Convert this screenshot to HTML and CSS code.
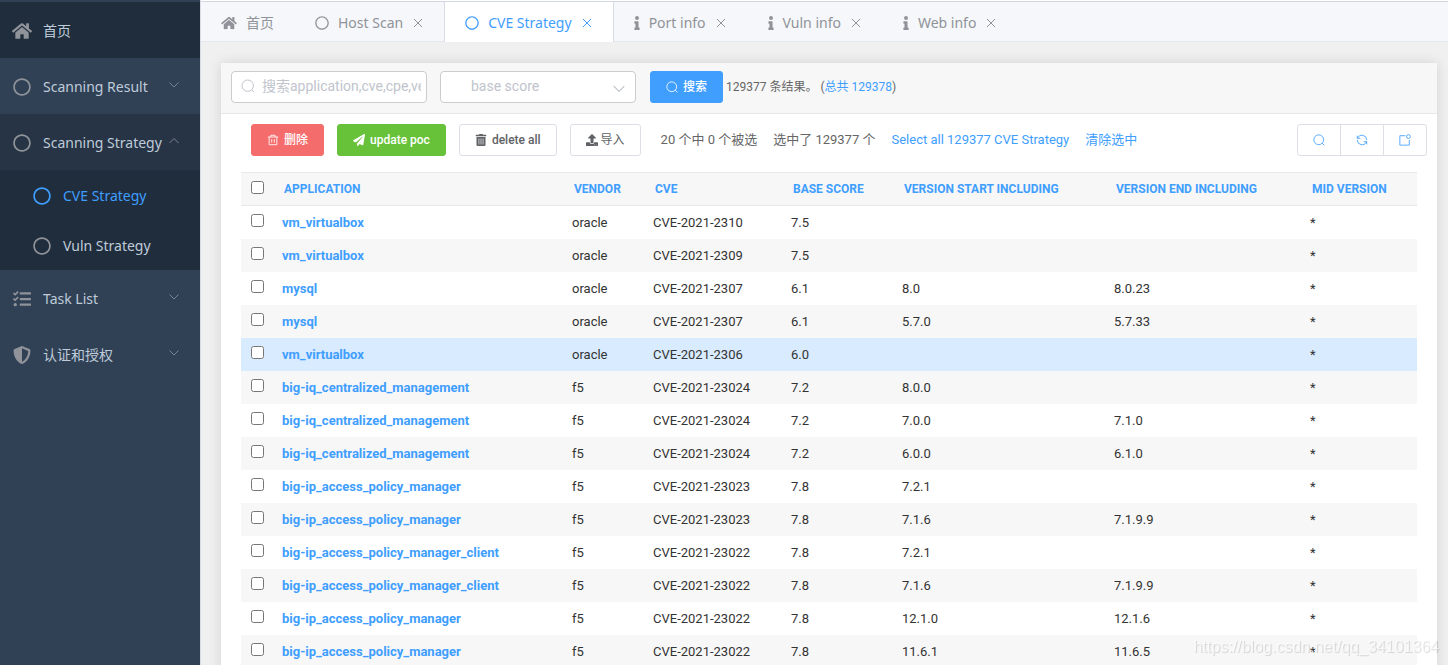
FILE: index.html
```
<!DOCTYPE html>
<html lang="zh">
<head>
<meta charset="utf-8">
<title>CVE Strategy</title>
<link rel="stylesheet" href="styles.css">
</head>
<body>
<svg class="sprite" aria-hidden="true">
  <symbol id="home" viewBox="0 0 576 512"><path d="M280.4 148.3L96 300.100V464a16 16 0 0 0 16 16l112-.3a16 16 0 0 0 16-16V368a16 16 0 0 1 16-16h64a16 16 0 0 1 16 16v95.600a16 16 0 0 0 16 16.100L464 480a16 16 0 0 0 16-16V300L295.700 148.300a12.200 12.200 0 0 0-15.300 0zM571.600 251.500L488 182.600V44a12 12 0 0 0-12-12h-56a12 12 0 0 0-12 12v72.600L318.500 43a48 48 0 0 0-61 0L4.300 251.500a12 12 0 0 0-1.600 16.900l25.500 31a12 12 0 0 0 16.900 1.600L280.400 107.200a12.200 12.200 0 0 1 15.300 0L531 301a12 12 0 0 0 16.900-1.600l25.500-31a12 12 0 0 0-1.800-16.900z"/></symbol>
  <symbol id="circle" viewBox="0 0 512 512"><path d="M256 8C119 8 8 119 8 256s111 248 248 248 248-111 248-248S393 8 256 8zm0 448c-110.500 0-200-89.500-200-200S145.500 56 256 56s200 89.500 200 200-89.500 200-200 200z"/></symbol>
  <symbol id="tasks" viewBox="0 0 512 512"><path d="M139.600 35.500a12 12 0 0 0-17 0L58.900 98.800l-22.700-22.100a12 12 0 0 0-17 0L3.500 92.400a12 12 0 0 0 0 17l47.600 47.400a12.800 12.800 0 0 0 17.600 0L156.300 69.200a12 12 0 0 0 .1-17zm0 159.200a12 12 0 0 0-17 0L58.900 258.400l-22.700-22.100a12 12 0 0 0-17 0L3.500 252a12 12 0 0 0 0 17l47.600 47.400a12.800 12.800 0 0 0 17.600 0l87.600-87.600a12 12 0 0 0 .1-17zM64 368a48 48 0 1 0 0 96 48 48 0 0 0 0-96zm432 16H208a16 16 0 0 0-16 16v32a16 16 0 0 0 16 16h288a16 16 0 0 0 16-16v-32a16 16 0 0 0-16-16zm0-320H208a16 16 0 0 0-16 16v32a16 16 0 0 0 16 16h288a16 16 0 0 0 16-16V80a16 16 0 0 0-16-16zm0 160H208a16 16 0 0 0-16 16v32a16 16 0 0 0 16 16h288a16 16 0 0 0 16-16v-32a16 16 0 0 0-16-16z"/></symbol>
  <symbol id="shield" viewBox="0 0 512 512"><path d="M466.500 83.700l-192-80a48.200 48.200 0 0 0-36.900 0l-192 80A48 48 0 0 0 16 128c0 198.500 114.500 335.700 221.500 380.300a48 48 0 0 0 36.900 0C360.100 472.600 496 349.300 496 128a48 48 0 0 0-29.500-44.300zM256.100 446.300L256 65.900l175.900 73.300c-3.300 151.400-82.100 261.100-175.800 307.100z"/></symbol>
  <symbol id="info" viewBox="0 0 192 512"><path d="M20 424.200h20V279.800H20a20 20 0 0 1-20-20V212a20 20 0 0 1 20-20h112a20 20 0 0 1 20 20v212.200h20a20 20 0 0 1 20 20V492a20 20 0 0 1-20 20H20a20 20 0 0 1-20-20v-47.800a20 20 0 0 1 20-20zM96 0a72 72 0 1 0 0 144A72 72 0 0 0 96 0z"/></symbol>
  <symbol id="plane" viewBox="0 0 512 512"><path d="M476 3.200L12.500 270.600c-18.100 10.400-15.800 35.600 2.200 43.200L121 358.400l287.300-253.200c5.500-4.900 13.300 2.600 8.600 8.300L176 407v80.500c0 23.600 28.500 32.900 42.500 15.800L282 426l124.600 52.200c14.200 6 30.400-2.900 33-18.200l72-432C515 7.800 493.300-6.800 476 3.200z"/></symbol>
  <symbol id="trash" viewBox="0 0 448 512"><path fill-rule="evenodd" d="M432 32H312l-9-19a24 24 0 0 0-22-13H166a24 24 0 0 0-21 13l-9 19H16A16 16 0 0 0 0 48v32a16 16 0 0 0 16 16h416a16 16 0 0 0 16-16V48a16 16 0 0 0-16-16zM32 128v336a48 48 0 0 0 48 48h288a48 48 0 0 0 48-48V128zm90 64h28v256h-28zm88 0h28v256h-28zm88 0h28v256h-28z"/></symbol>
  <symbol id="upload" viewBox="0 0 512 512"><path d="M296 384h-80a24 24 0 0 1-24-24V192h-87.700c-17.800 0-26.700-21.500-14.100-34.100L242.300 5.700a19.400 19.400 0 0 1 27.300 0l152.200 152.200c12.600 12.600 3.700 34.100-14.100 34.100H320v168a24 24 0 0 1-24 24zm216-8v112a24 24 0 0 1-24 24H24a24 24 0 0 1-24-24V376a24 24 0 0 1 24-24h136v8a56 56 0 0 0 56 56h80a56 56 0 0 0 56-56v-8h136a24 24 0 0 1 24 24zm-124 88a20 20 0 1 0-40 0 20 20 0 0 0 40 0zm64 0a20 20 0 1 0-40 0 20 20 0 0 0 40 0z"/></symbol>
  <symbol id="down" viewBox="0 0 12 12"><path class="line" d="M1.500 3.500L6 8l4.500-4.500"/></symbol>
  <symbol id="up" viewBox="0 0 12 12"><path class="line" d="M1.500 8L6 3.500 10.500 8"/></symbol>
  <symbol id="close" viewBox="0 0 12 12"><path class="line" d="M2 2l8 8M10 2l-8 8"/></symbol>
  <symbol id="search" viewBox="0 0 14 14"><circle class="line" cx="6.700" cy="6.700" r="5.700"/><path class="line" d="M10.700 10.700l2.500 2.500"/></symbol>
  <symbol id="bin" viewBox="0 0 14 14"><path class="line" d="M1 3.500h12M4.500 3.500v-2h5v2M2.500 3.500v9h9v-9M5.500 6v4M8.500 6v4"/></symbol>
  <symbol id="refresh" viewBox="0 0 14 14"><path class="line" d="M1.500 5.500V2M1.500 5h3.500M2 4.700A5.500 5.500 0 0 1 12.500 7M12.500 12V8.500M12.500 9H9M12 9.300A5.500 5.500 0 0 1 1.500 7"/></symbol>
  <symbol id="export" viewBox="0 0 14 14"><path class="line" d="M7.500 2H1v11h11V7"/><circle class="line" cx="11" cy="3" r="2.200"/></symbol>
</svg>
<div class="app">
  <nav class="sidebar">
    <a class="item home" href="#"><svg class="ico"><use href="#home"/></svg><span>首页</span></a>
    <a class="item" href="#"><svg class="ico"><use href="#circle"/></svg><span>Scanning Result</span><svg class="arrow"><use href="#down"/></svg></a>
    <a class="item open" href="#"><svg class="ico"><use href="#circle"/></svg><span>Scanning Strategy</span><svg class="arrow"><use href="#up"/></svg></a>
    <div class="submenu">
      <a class="item active" href="#"><svg class="ico"><use href="#circle"/></svg><span>CVE Strategy</span></a>
      <a class="item" href="#"><svg class="ico"><use href="#circle"/></svg><span>Vuln Strategy</span></a>
    </div>
    <a class="item" href="#"><svg class="ico"><use href="#tasks"/></svg><span>Task List</span><svg class="arrow"><use href="#down"/></svg></a>
    <a class="item" href="#"><svg class="ico"><use href="#shield"/></svg><span>认证和授权</span><svg class="arrow"><use href="#down"/></svg></a>
  </nav>
  <main class="main">
    <div class="tabs">
      <a class="tab" href="#"><svg class="wide"><use href="#home"/></svg><span>首页</span></a>
      <a class="tab" href="#"><svg><use href="#circle"/></svg><span>Host Scan</span><svg class="close"><use href="#close"/></svg></a>
      <a class="tab current" href="#"><svg><use href="#circle"/></svg><span>CVE Strategy</span><svg class="close"><use href="#close"/></svg></a>
      <a class="tab" href="#"><svg class="narrow"><use href="#info"/></svg><span>Port info</span><svg class="close"><use href="#close"/></svg></a>
      <a class="tab" href="#"><svg class="narrow"><use href="#info"/></svg><span>Vuln info</span><svg class="close"><use href="#close"/></svg></a>
      <a class="tab" href="#"><svg class="narrow"><use href="#info"/></svg><span>Web info</span><svg class="close"><use href="#close"/></svg></a>
    </div>
    <section class="card">
      <form class="filters">
        <label class="field"><svg class="lead"><use href="#search"/></svg><input type="text" aria-label="搜索" placeholder="搜索application,cve,cpe,version"></label>
        <label class="field"><select aria-label="base score"><option>base score</option></select><svg class="caret"><use href="#down"/></svg></label>
        <button class="btn primary" type="button"><svg><use href="#search"/></svg>搜索</button>
        <p class="result">129377 条结果。 (<a href="#">总共 129378</a>)</p>
      </form>
      <div class="actions">
        <button class="btn danger" type="button"><svg><use href="#bin"/></svg>删除</button>
        <button class="btn success" type="button"><svg><use href="#plane"/></svg>update poc</button>
        <button class="btn" type="button"><svg><use href="#trash"/></svg>delete all</button>
        <button class="btn import" type="button"><svg><use href="#upload"/></svg>导入</button>
        <div class="selection"><span>20 个中 0 个被选</span><span>选中了 129377 个</span><a href="#">Select all 129377 CVE Strategy</a><a href="#">清除选中</a></div>
        <div class="group">
          <button type="button" aria-label="搜索"><svg><use href="#search"/></svg></button>
          <button type="button" aria-label="刷新"><svg><use href="#refresh"/></svg></button>
          <button type="button" aria-label="导出"><svg><use href="#export"/></svg></button>
        </div>
      </div>
      <table class="grid">
        <colgroup><col class="c-check"><col class="c-app"><col class="c-vendor"><col class="c-cve"><col class="c-score"><col class="c-start"><col class="c-end"><col class="c-mid"></colgroup>
        <thead><tr><th><input type="checkbox" aria-label="全选"></th><th><a href="#">APPLICATION</a></th><th><a href="#">VENDOR</a></th><th><a href="#">CVE</a></th><th><a href="#">BASE SCORE</a></th><th><a href="#">VERSION START INCLUDING</a></th><th><a href="#">VERSION END INCLUDING</a></th><th><a href="#">MID VERSION</a></th></tr></thead>
        <tbody>
          <tr><td><input type="checkbox" aria-label="1"></td><td><a href="#">vm_virtualbox</a></td><td>oracle</td><td>CVE-2021-2310</td><td>7.5</td><td></td><td></td><td>*</td></tr>
          <tr><td><input type="checkbox" aria-label="2"></td><td><a href="#">vm_virtualbox</a></td><td>oracle</td><td>CVE-2021-2309</td><td>7.5</td><td></td><td></td><td>*</td></tr>
          <tr><td><input type="checkbox" aria-label="3"></td><td><a href="#">mysql</a></td><td>oracle</td><td>CVE-2021-2307</td><td>6.1</td><td>8.0</td><td>8.0.23</td><td>*</td></tr>
          <tr><td><input type="checkbox" aria-label="4"></td><td><a href="#">mysql</a></td><td>oracle</td><td>CVE-2021-2307</td><td>6.1</td><td>5.7.0</td><td>5.7.33</td><td>*</td></tr>
          <tr class="hover"><td><input type="checkbox" aria-label="5"></td><td><a href="#">vm_virtualbox</a></td><td>oracle</td><td>CVE-2021-2306</td><td>6.0</td><td></td><td></td><td>*</td></tr>
          <tr><td><input type="checkbox" aria-label="6"></td><td><a href="#">big-iq_centralized_management</a></td><td>f5</td><td>CVE-2021-23024</td><td>7.2</td><td>8.0.0</td><td></td><td>*</td></tr>
          <tr><td><input type="checkbox" aria-label="7"></td><td><a href="#">big-iq_centralized_management</a></td><td>f5</td><td>CVE-2021-23024</td><td>7.2</td><td>7.0.0</td><td>7.1.0</td><td>*</td></tr>
          <tr><td><input type="checkbox" aria-label="8"></td><td><a href="#">big-iq_centralized_management</a></td><td>f5</td><td>CVE-2021-23024</td><td>7.2</td><td>6.0.0</td><td>6.1.0</td><td>*</td></tr>
          <tr><td><input type="checkbox" aria-label="9"></td><td><a href="#">big-ip_access_policy_manager</a></td><td>f5</td><td>CVE-2021-23023</td><td>7.8</td><td>7.2.1</td><td></td><td>*</td></tr>
          <tr><td><input type="checkbox" aria-label="10"></td><td><a href="#">big-ip_access_policy_manager</a></td><td>f5</td><td>CVE-2021-23023</td><td>7.8</td><td>7.1.6</td><td>7.1.9.9</td><td>*</td></tr>
          <tr><td><input type="checkbox" aria-label="11"></td><td><a href="#">big-ip_access_policy_manager_client</a></td><td>f5</td><td>CVE-2021-23022</td><td>7.8</td><td>7.2.1</td><td></td><td>*</td></tr>
          <tr><td><input type="checkbox" aria-label="12"></td><td><a href="#">big-ip_access_policy_manager_client</a></td><td>f5</td><td>CVE-2021-23022</td><td>7.8</td><td>7.1.6</td><td>7.1.9.9</td><td>*</td></tr>
          <tr><td><input type="checkbox" aria-label="13"></td><td><a href="#">big-ip_access_policy_manager</a></td><td>f5</td><td>CVE-2021-23022</td><td>7.8</td><td>12.1.0</td><td>12.1.6</td><td>*</td></tr>
          <tr><td><input type="checkbox" aria-label="14"></td><td><a href="#">big-ip_access_policy_manager</a></td><td>f5</td><td>CVE-2021-23022</td><td>7.8</td><td>11.6.1</td><td>11.6.5</td><td>*</td></tr>
        </tbody>
      </table>
    </section>
  </main>
</div>
<div class="watermark">https://blog.csdn.net/qq_34101364</div>
</body>
</html>
```
FILE: styles.css
```
* { box-sizing: border-box; }
body { margin: 0; overflow: hidden; font: 13px/17px Roboto, "Noto Sans CJK SC", sans-serif; color: #333; background: #f0f0f0; }
a { color: #409eff; text-decoration: none; }
svg { fill: currentColor; flex: none; }
.line { fill: none; stroke: currentColor; stroke-width: 1; }
.sprite { position: absolute; width: 0; height: 0; }
.app { display: flex; height: 100vh; overflow: hidden; }

.sidebar { width: 200px; flex: none; padding-top: 2px; background: #304156; font: 14px/20px "Noto Sans", "Noto Sans CJK SC", sans-serif; }
.item { display: flex; align-items: center; height: 56px; padding: 2px 20px 0 12px; color: #bfcbd9; white-space: nowrap; }
.item.home { background: #1f2d3d; }
.item.open { background: #263445; }
.ico { width: 20px; height: 18px; margin-right: 11px; color: #909399; }
.arrow { width: 12px; height: 12px; margin: 0 0 4px auto; color: #7c8692; }
.submenu { background: #1f2d3d; }
.submenu .item { height: 50px; padding-left: 32px; }
.item.active, .item.active .ico { color: #409eff; }

.main { flex: 1; min-width: 0; border-left: 1px solid #d8dce5; }
.tabs { display: flex; height: 40px; margin: 2px 0 21px; border-bottom: 1px solid #e4e7ed; background: #f5f7fa; box-shadow: 0 -1px #d0d7e2, 0 -2px #fff; font: 14px/20px "Noto Sans", "Noto Sans CJK SC", sans-serif; }
.tab { display: flex; align-items: center; height: 40px; padding: 2px 20px 0; border-right: 1px solid transparent; color: #909399; white-space: nowrap; }
.tab svg { width: 14px; height: 14px; margin-right: 9px; }
.tab .wide { width: 16px; }
.tab .narrow { width: 6px; }
.tab .close { width: 12px; height: 12px; margin: 0 0 0 9px; }
.tab.current { color: #409eff; background: #fff; border-right-color: #d8dce5; box-shadow: -1px 0 #d8dce5; }

.card { margin: 0 11px 0 20px; min-height: 100vh; background: #fff; box-shadow: 0 0 12px rgba(0, 0, 0, .12); }
.filters { display: flex; align-items: flex-start; padding: 8px 10px 10px; border-bottom: 1px solid #e8e8e8; background: #f7f7f7; }
.field { position: relative; width: 196px; margin-right: 13px; }
.field + .btn { margin-left: 1px; }
.field input, .field select { display: block; width: 100%; height: 32px; padding: 0 5px 2px 30px; border: 1px solid #ccc; border-radius: 4px; outline: 0; background: #fff; color: #c0c4cc; font: 14px/20px Roboto, "Noto Sans CJK SC", sans-serif; appearance: none; }
.field input::placeholder { color: #c0c4cc; }
.lead, .caret { position: absolute; width: 14px; height: 14px; color: #c0c4cc; }
.lead { left: 10px; top: 8px; }
.caret { right: 10px; top: 11px; }
.btn { display: flex; align-items: center; justify-content: center; height: 32px; padding: 0 15px; border: 1px solid #dcdfe6; border-radius: 3px; background: #fff; color: #606266; font: 500 12px/16px Roboto, "Noto Sans CJK SC", sans-serif; white-space: nowrap; }
.btn svg { width: 12px; height: 12px; margin-right: 5px; }
.btn.primary { border-color: #409eff; background: #409eff; color: #fff; }
.btn.danger { border-color: #f56c6c; background: #f56c6c; color: #fff; }
.btn.success { border-color: #67c23a; background: #67c23a; color: #fff; }
.btn.import { font-weight: 400; }
.btn.import svg { margin-right: 3px; }
.result { margin: 8px 0 0 3px; color: #666; font-size: 12px; }

.actions { display: flex; align-items: center; gap: 13px; padding: 10px 10px 16px 30px; }
.selection { display: flex; gap: 16px; margin-left: 7px; padding-bottom: 2px; color: #666; white-space: nowrap; }
.group { display: flex; width: 130px; margin-left: auto; border: 1px solid #dcdfe6; border-radius: 3px; }
.group button { display: flex; flex: 1; align-items: center; justify-content: center; height: 30px; padding: 0; border: 0; background: none; color: #409eff; }
.group button + button { border-left: 1px solid #dcdfe6; }
.group svg { width: 12px; height: 12px; }

.grid { width: calc(100% - 40px); margin: 0 20px; border-collapse: separate; border-spacing: 0; table-layout: fixed; }
.c-check { width: 33px; }
.c-app { width: 290px; }
.c-vendor { width: 81px; }
.c-cve { width: 138px; }
.c-score { width: 111px; }
.c-start { width: 212px; }
.c-end { width: 196px; }
.c-mid { width: 115px; }
.grid th { height: 34px; padding: 0 10px; border: solid #e8e8e8; border-width: 1px 0; background: #f7f7f7; text-align: left; font-size: 12px; font-weight: 700; white-space: nowrap; }
.grid td { height: 33px; padding: 0 8px; white-space: nowrap; }
.grid td a { font-weight: 700; }
.grid tbody tr:nth-child(even) { background: #f7f7f7; }
.grid tbody tr.hover { background: #d9ebff; }
.grid input { display: block; width: 13px; height: 13px; margin: 0 0 4px; }
.grid th:first-child, .grid td:first-child { padding-left: 10px; }
.watermark { position: fixed; right: 9px; bottom: 8px; color: rgba(255, 255, 255, .6); text-shadow: 1px 1px 1px rgba(0, 0, 0, .15); font: 16px/20px "Liberation Sans", sans-serif; pointer-events: none; }
```
